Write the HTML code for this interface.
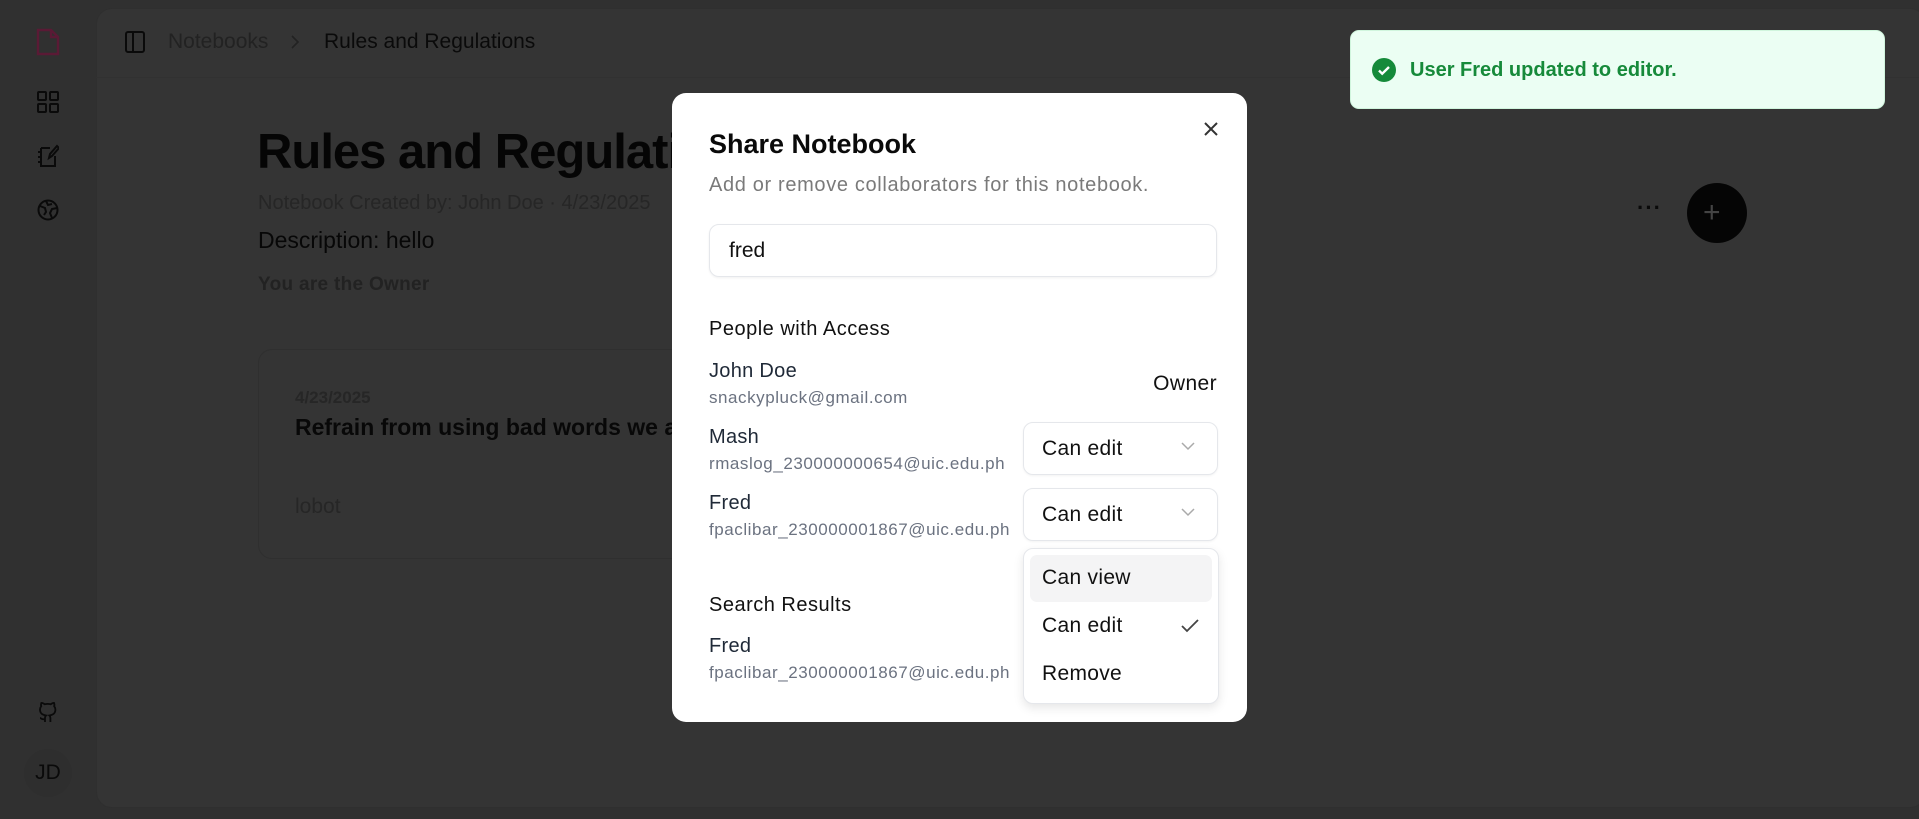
<!DOCTYPE html>
<html><head><meta charset="utf-8"><style>
*{box-sizing:border-box;margin:0;padding:0}
body{width:1919px;height:819px;overflow:hidden;background:#303030;font-family:"Liberation Sans",sans-serif;position:relative;color:#111}
.abs{position:absolute}
.panel{left:96px;top:8px;width:1830px;height:800px;background:#343434;border:1px solid #2f2f2f;border-radius:16px}
.modal{left:672px;top:93px;width:575px;height:629px;background:#fff;border-radius:14px}
.m{position:absolute;white-space:nowrap}
.nm{font-size:20px;color:#1f2937;letter-spacing:.3px}
.em{font-size:17px;color:#6b7280;letter-spacing:.55px}
.sel{position:absolute;left:351px;width:195px;height:53px;border:1px solid #e5e7eb;border-radius:10px;font-size:21px;padding:14px 0 0 18px;box-shadow:0 1px 2px rgba(0,0,0,.05);letter-spacing:.3px}
.chev{position:absolute;right:22px;top:19px}
</style></head><body>
<div class="abs panel"></div>
<div class="abs" style="left:96px;top:77px;width:1830px;height:1px;background:#313131"></div>
<svg class="abs" style="left:36px;top:28px" width="24" height="28" viewBox="0 0 24 28" fill="none" stroke="#5a1a35" stroke-width="2.4"><path d="M2 2h13l7 7v17H2z M15 2v7h7"/></svg>
<svg class="abs" style="left:37px;top:91px" width="22" height="22" fill="none" stroke="#0a0a0a" stroke-width="2"><rect x="1" y="1" width="8" height="8" rx="1"/><rect x="13" y="1" width="8" height="8" rx="1"/><rect x="1" y="13" width="8" height="8" rx="1"/><rect x="13" y="13" width="8" height="8" rx="1"/></svg>
<svg class="abs" style="left:37px;top:144px" width="22" height="24" fill="none" stroke="#0a0a0a" stroke-width="2"><path d="M4 4h9 M4 4v18h14V12 M1 8h4 M1 13h4 M1 18h4 M12 14l1-4 7-8 2 2-7 8z"/></svg>
<svg class="abs" style="left:37px;top:199px" width="22" height="22" fill="none" stroke="#0a0a0a" stroke-width="2"><circle cx="11" cy="11" r="9.5"/><path d="M3 7l5 2 1 4-2 3 M20 9l-5 1-2 4 2 5 M9 2l2 4 4-1"/></svg>
<svg class="abs" style="left:37px;top:701px" width="22" height="22" fill="none" stroke="#0a0a0a" stroke-width="1.8"><path d="M8 21v-4c0-1 .5-2 1-2.5-3-.5-6-1.5-6-6 0-1.2.4-2.3 1.2-3.2-.2-.6-.4-1.8.1-3.3 0 0 1.1-.3 3.4 1.3a11 11 0 0 1 6 0C16 1.700 17.1 2 17.1 2c.5 1.5.3 2.7.1 3.300.8.9 1.2 2 1.2 3.2 0 4.500-3 5.500-6 6 .6.5 1 1.500 1 2.500v4 M8 18c-3 1-4-1-5-1"/></svg>
<div class="abs" style="left:24px;top:749px;width:48px;height:48px;border-radius:50%;background:#2e2e2e;font-size:21px;color:#0a0a0a;text-align:center;line-height:48px">JD</div>
<svg class="abs" style="left:125px;top:31px" width="20" height="22" fill="none" stroke="#0a0a0a" stroke-width="2"><rect x="1" y="1" width="18" height="20" rx="2"/><path d="M8 1v20"/></svg>
<div class="abs" style="left:168px;top:30px;font-size:21px;color:#222">Notebooks</div>
<svg class="abs" style="left:290px;top:35px" width="10" height="14" fill="none" stroke="#222" stroke-width="1.6"><path d="M2 1l6 6-6 6"/></svg>
<div class="abs" style="left:324px;top:30px;font-size:21px;color:#0a0a0a">Rules and Regulations</div>
<div class="abs" style="left:257px;top:124px;font-size:49px;font-weight:bold;color:#050505;letter-spacing:-1px">Rules and Regulations</div>
<div class="abs" style="left:258px;top:192px;font-size:20px;color:#262626">Notebook Created by: John Doe · 4/23/2025</div>
<div class="abs" style="left:258px;top:227px;font-size:23px;color:#070707">Description: hello</div>
<div class="abs" style="left:258px;top:274px;font-size:19px;font-weight:bold;color:#222;letter-spacing:.3px">You are the Owner</div>
<div class="abs" style="left:258px;top:349px;width:600px;height:210px;border:1px solid #2f2f2f;border-radius:14px;background:#343434"></div>
<div class="abs" style="left:295px;top:388px;font-size:17px;font-weight:bold;color:#262626">4/23/2025</div>
<div class="abs" style="left:295px;top:414px;font-size:23px;font-weight:bold;color:#080808">Refrain from using bad words we a</div>
<div class="abs" style="left:295px;top:495px;font-size:21px;color:#262626">lobot</div>
<div class="abs" style="left:1637px;top:195px;font-size:22px;color:#0a0a0a;letter-spacing:1px;font-weight:bold">···</div>
<div class="abs" style="left:1687px;top:183px;width:60px;height:60px;border-radius:50%;background:#050505"></div>
<div class="abs" style="left:1703px;top:199px;font-size:30px;line-height:28px;color:#444">+</div>
<div class="abs" style="left:1350px;top:30px;width:535px;height:79px;background:#ebfef3;border:1px solid #d0f5dd;border-radius:9px"></div>
<svg class="abs" style="left:1372px;top:58px" width="24" height="24"><circle cx="12" cy="12" r="12" fill="#158a3a"/><path d="M7 12.5l3.2 3.2L17 9" stroke="#fff" stroke-width="2.4" fill="none"/></svg>
<div class="abs" style="left:1410px;top:59px;font-size:20px;font-weight:bold;color:#168a3a">User Fred updated to editor.</div>
<div class="abs modal">
 <svg class="m" style="left:531px;top:28px" width="16" height="16" stroke="#333" stroke-width="2"><path d="M2 2l12 12M14 2L2 14"/></svg>
 <div class="m" style="left:37px;top:36px;font-size:27px;font-weight:bold;color:#0a0a0a">Share Notebook</div>
 <div class="m" style="left:37px;top:81px;font-size:20px;color:#7a7a7a;letter-spacing:.65px">Add or remove collaborators for this notebook.</div>
 <div class="m" style="left:37px;top:131px;width:508px;height:53px;border:1px solid #e5e7eb;border-radius:10px;box-shadow:0 1px 2px rgba(0,0,0,.06);font-size:21px;padding:14px 0 0 19px">fred</div>
 <div class="m" style="left:37px;top:225px;font-size:20px;color:#111;letter-spacing:.5px">People with Access</div>
 <div class="m nm" style="left:37px;top:267px">John Doe</div>
 <div class="m em" style="left:37px;top:295px">snackypluck@gmail.com</div>
 <div class="m" style="right:30px;top:279px;font-size:21px;color:#111;letter-spacing:.4px">Owner</div>
 <div class="m nm" style="left:37px;top:333px">Mash</div>
 <div class="m em" style="left:37px;top:361px">rmaslog_230000000654@uic.edu.ph</div>
 <div class="sel" style="top:329px">Can edit<svg class="chev" width="14" height="9" fill="none" stroke="#aaa" stroke-width="1.5"><path d="M1 1l6 6 6-6"/></svg></div>
 <div class="m nm" style="left:37px;top:399px">Fred</div>
 <div class="m em" style="left:37px;top:427px">fpaclibar_230000001867@uic.edu.ph</div>
 <div class="sel" style="top:395px">Can edit<svg class="chev" width="14" height="9" fill="none" stroke="#aaa" stroke-width="1.5"><path d="M1 1l6 6 6-6"/></svg></div>
 <div class="m" style="left:37px;top:501px;font-size:20px;color:#111;letter-spacing:.5px">Search Results</div>
 <div class="m nm" style="left:37px;top:542px">Fred</div>
 <div class="m em" style="left:37px;top:570px">fpaclibar_230000001867@uic.edu.ph</div>
 <div class="m" style="left:351px;top:455px;width:196px;height:156px;border:1px solid #e5e7eb;border-radius:10px;background:#fff;box-shadow:0 4px 10px rgba(0,0,0,.1)">
  <div style="position:absolute;left:6px;top:6px;width:182px;height:47px;background:#f4f4f5;border-radius:7px"></div>
  <div style="position:absolute;left:18px;top:17px;font-size:21px;letter-spacing:.3px">Can view</div>
  <div style="position:absolute;left:18px;top:65px;font-size:21px;letter-spacing:.3px">Can edit</div>
  <svg style="position:absolute;left:157px;top:70px" width="18" height="14" fill="none" stroke="#444" stroke-width="1.8"><path d="M1 7l5 5L17 1"/></svg>
  <div style="position:absolute;left:18px;top:113px;font-size:21px;letter-spacing:.3px">Remove</div>
 </div>
</div>
</body></html>
